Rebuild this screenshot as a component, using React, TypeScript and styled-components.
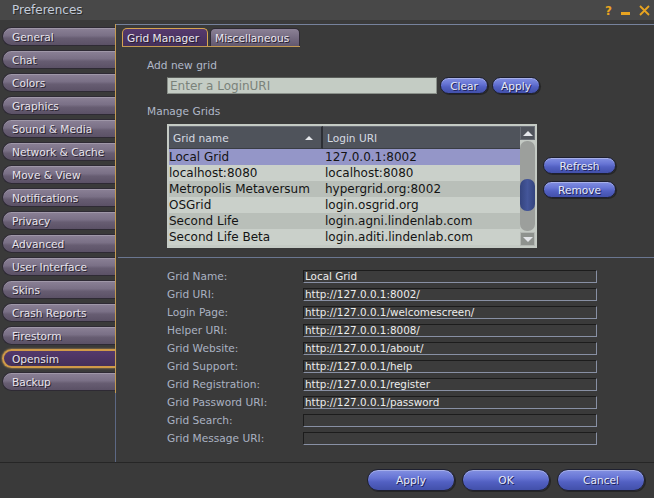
import React from "react";
import styled, { createGlobalStyle } from "styled-components";

const GlobalStyle = createGlobalStyle`
  html, body {
    margin: 0;
    padding: 0;
    background: #3a3a3a;
  }
  body {
    font-family: "DejaVu Sans", "Liberation Sans", sans-serif;
  }
  * {
    box-sizing: border-box;
  }
`;

const Window = styled.div`
  width: 654px;
  height: 498px;
  display: flex;
  flex-direction: column;
  background: #3a3a3a;
  overflow: hidden;
`;

const TitleBar = styled.div`
  height: 20px;
  flex: none;
  display: flex;
  align-items: center;
  padding: 0 4px 0 12px;
  background: #484848;
`;

const Title = styled.span`
  flex: 1;
  font-size: 12px;
  color: #c4ccda;
  text-shadow: 1px 1px 0 #2c2c2c;
`;

const TitleIcons = styled.div`
  display: flex;
  align-items: center;
  gap: 9px;
  color: #e8a420;
`;

const HelpGlyph = styled.span`
  font-size: 12px;
  font-weight: bold;
  line-height: 12px;
  margin-top: 1px;
`;

const Body = styled.div`
  flex: 1;
  display: flex;
  padding-top: 4px;
  min-height: 0;
`;

const Sidebar = styled.div`
  width: 116px;
  flex: none;
  display: flex;
  flex-direction: column;
`;

const TabList = styled.div`
  display: flex;
  flex-direction: column;
  gap: 4px;
  padding: 3px 0 2px 2px;
  border-right: 1px solid #c49a52;
`;

const SidebarFill = styled.div`
  flex: 1;
  border-right: 1px solid #5c6884;
`;

const SideTab = styled.div<{ $active?: boolean }>`
  height: 19px;
  display: flex;
  align-items: center;
  padding-left: ${(p) => (p.$active ? "8px" : "9px")};
  font-size: 10.6px;
  color: #e8e4ec;
  text-shadow: 1px 1px 0 #2a2430;
  border-radius: 10px 0 0 10px;
  white-space: nowrap;
  background: ${(p) =>
    p.$active
      ? "linear-gradient(#54396c, #44305a)"
      : "linear-gradient(#8b8196 0%, #7a7086 45%, #675d72 60%, #5b5166 100%)"};
  border: ${(p) => (p.$active ? "2px solid #d09a48" : "1px solid #2e2a34")};
  border-right: none;
  box-shadow: ${(p) =>
    p.$active ? "0 0 2px #e0b060" : "inset 0 1px 0 rgba(255,255,255,0.18)"};
`;

const Panel = styled.div`
  flex: 1;
  display: flex;
  flex-direction: column;
  border-top: 1px solid #76829c;
  min-width: 0;
`;

const TabStrip = styled.div`
  display: flex;
  gap: 2px;
  align-self: flex-start;
  width: 178px;
  margin: 3px 0 0 6px;
  border-bottom: 1px solid #c49a52;
`;

const Tab = styled.div<{ $active?: boolean }>`
  height: 18px;
  display: flex;
  align-items: center;
  padding: 0 4px;
  font-size: 10.6px;
  color: #ece8f0;
  text-shadow: 1px 1px 0 #241c2c;
  border-radius: 5px 5px 0 0;
  white-space: nowrap;
  width: ${(p) => (p.$active ? "86px" : "90px")};
  background: ${(p) =>
    p.$active
      ? "linear-gradient(#56396e, #44305a)"
      : "linear-gradient(#8b8196 0%, #766c82 50%, #62586e 100%)"};
  border: ${(p) => (p.$active ? "1px solid #d6a450" : "1px solid #2e2a34")};
  border-bottom: none;
`;

const GridBody = styled.div`
  padding-left: 31px;
  display: flex;
  flex-direction: column;
`;

const SectionLabel = styled.div<{ $top: number }>`
  margin-top: ${(p) => p.$top}px;
  height: 14px;
  line-height: 14px;
  font-size: 10.6px;
  color: #b0b8c8;
`;

const InputRow = styled.div`
  display: flex;
  align-items: center;
  margin: 5px 0 0 20px;
`;

const UriInput = styled.div`
  width: 270px;
  height: 17px;
  margin-right: 3px;
  padding-left: 2px;
  display: flex;
  align-items: center;
  background: #c4ccc4;
  border: 1px solid #8a908a;
  border-top-color: #5a5e5a;
  font-size: 12px;
  color: #7a827a;
`;

const PillButton = styled.button<{ $w: number; $h: number }>`
  width: ${(p) => p.$w}px;
  height: ${(p) => p.$h}px;
  flex: none;
  padding: 0;
  border-radius: ${(p) => p.$h / 2}px;
  border: 1px solid #1e2030;
  background: linear-gradient(#8390e2 0%, #6674d4 40%, #5260c2 60%, #4250aa 100%);
  box-shadow: inset 0 1px 0 rgba(255, 255, 255, 0.3), 1px 1px 0 #262626;
  color: #e6eaf8;
  font-family: "DejaVu Sans", sans-serif;
  font-size: 10.6px;
  text-shadow: 1px 1px 0 #1e2256;
`;

const ButtonPair = styled.div`
  display: flex;
  gap: 4px;
`;

const ListRow = styled.div`
  display: flex;
  margin: 6px 0 0 20px;
  gap: 6px;
`;

const Table = styled.div`
  width: 370px;
  height: 124px;
  padding: 2px;
  display: flex;
  background: #c4cac4;
`;

const TableMain = styled.div`
  flex: 1;
  display: flex;
  flex-direction: column;
`;

const HeaderRow = styled.div`
  height: 23px;
  display: flex;
  background: #4f535b;
`;

const HeaderCell = styled.div<{ $w?: number }>`
  ${(p) => (p.$w ? `width: ${p.$w}px;` : "flex: 1;")}
  display: flex;
  align-items: center;
  padding-left: 4px;
  font-size: 10.6px;
  color: #d6dae2;
  border-right: ${(p) => (p.$w ? "2px solid #2c2e34" : "none")};
  border-bottom: 1px solid #3a3d44;
  border-top: 1px solid #6a6e76;
`;

const SortArrow = styled.span`
  margin-left: auto;
  margin-right: 8px;
  width: 0;
  height: 0;
  border-left: 4px solid transparent;
  border-right: 4px solid transparent;
  border-bottom: 4px solid #e4e6ea;
`;

const GridRow = styled.div<{ $tone: "sel" | "light" | "dark" }>`
  height: 16px;
  display: flex;
  align-items: center;
  font-size: 12px;
  color: #141414;
  white-space: nowrap;
  background: ${(p) =>
    p.$tone === "sel" ? "#9496c8" : p.$tone === "light" ? "#cad0ca" : "#b9bfb9"};
`;

const Cell = styled.div<{ $w?: number }>`
  ${(p) => (p.$w ? `width: ${p.$w}px;` : "flex: 1;")}
  padding-left: ${(p) => (p.$w ? "0" : "2px")};
  overflow: hidden;
`;

const ScrollBar = styled.div`
  width: 15px;
  display: flex;
  flex-direction: column;
  gap: 1px;
`;

const ScrollArrow = styled.div<{ $down?: boolean }>`
  height: 14px;
  display: flex;
  align-items: center;
  justify-content: center;
  background: ${(p) => (p.$down ? "#8e928e" : "#50545c")};
  border: 1px solid ${(p) => (p.$down ? "#b4b8b4" : "#6a6e76")};
`;

const ArrowTri = styled.span<{ $down?: boolean }>`
  width: 0;
  height: 0;
  border-left: 5px solid transparent;
  border-right: 5px solid transparent;
  ${(p) =>
    p.$down ? "border-top: 5px solid #e4e6ea;" : "border-bottom: 5px solid #e4e6ea;"}
`;

const ScrollTrack = styled.div`
  flex: 1;
  display: flex;
  flex-direction: column;
  padding-top: 38px;
  background: #9c9f9c;
  border-radius: 7px;
`;

const ScrollThumb = styled.div`
  height: 32px;
  border-radius: 7px;
  background: linear-gradient(90deg, #34447e, #44569a 50%, #34447e);
`;

const SideButtons = styled.div`
  display: flex;
  flex-direction: column;
  gap: 7px;
  padding-top: 33px;
`;

const Separator = styled.div`
  height: 1px;
  margin: 9px 0 0 2px;
  background: #6a7690;
`;

const Form = styled.div`
  display: grid;
  grid-template-columns: 136px 294px;
  grid-auto-rows: 13px;
  row-gap: 5px;
  margin-top: 12px;
  padding-left: 51px;
`;

const FieldLabel = styled.div`
  font-size: 10.6px;
  line-height: 12px;
  color: #aab2c2;
  white-space: nowrap;
`;

const FieldBox = styled.div`
  height: 13px;
  padding-left: 1px;
  font-size: 10.4px;
  line-height: 11px;
  color: #ececec;
  white-space: nowrap;
  overflow: hidden;
  background: #3c3c3c;
  border: 1px solid #8890a4;
  border-top-color: #1c1c1c;
  border-left-color: #1c1c1c;
`;

const Footer = styled.div`
  height: 36px;
  flex: none;
  display: flex;
  justify-content: flex-end;
  gap: 7px;
  padding: 6px 9px 0 0;
  border-top: 1px solid #262626;
`;

const sections = [
  "General",
  "Chat",
  "Colors",
  "Graphics",
  "Sound & Media",
  "Network & Cache",
  "Move & View",
  "Notifications",
  "Privacy",
  "Advanced",
  "User Interface",
  "Skins",
  "Crash Reports",
  "Firestorm",
  "Opensim",
  "Backup",
];

const grids = [
  ["Local Grid", "127.0.0.1:8002"],
  ["localhost:8080", "localhost:8080"],
  ["Metropolis Metaversum", "hypergrid.org:8002"],
  ["OSGrid", "login.osgrid.org"],
  ["Second Life", "login.agni.lindenlab.com"],
  ["Second Life Beta", "login.aditi.lindenlab.com"],
];

const fields = [
  ["Grid Name:", "Local Grid"],
  ["Grid URI:", "http://127.0.0.1:8002/"],
  ["Login Page:", "http://127.0.0.1/welcomescreen/"],
  ["Helper URI:", "http://127.0.0.1:8008/"],
  ["Grid Website:", "http://127.0.0.1/about/"],
  ["Grid Support:", "http://127.0.0.1/help"],
  ["Grid Registration:", "http://127.0.0.1/register"],
  ["Grid Password URI:", "http://127.0.0.1/password"],
  ["Grid Search:", ""],
  ["Grid Message URI:", ""],
];

export default function App() {
  return (
    <>
      <GlobalStyle />
      <Window>
        <TitleBar>
          <Title>Preferences</Title>
          <TitleIcons>
            <HelpGlyph>?</HelpGlyph>
            <svg width="9" height="12" viewBox="0 0 9 12">
              <rect x="0" y="8" width="9" height="3" fill="#e8a420" />
            </svg>
            <svg width="11" height="11" viewBox="0 0 11 11">
              <path d="M1 1 L10 10 M10 1 L1 10" stroke="#e8a420" strokeWidth="1.8" />
            </svg>
          </TitleIcons>
        </TitleBar>

        <Body>
          <Sidebar>
            <TabList>
              {sections.map((s) => (
                <SideTab key={s} $active={s === "Opensim"}>
                  {s}
                </SideTab>
              ))}
            </TabList>
            <SidebarFill />
          </Sidebar>

          <Panel>
            <TabStrip>
              <Tab $active>Grid Manager</Tab>
              <Tab>Miscellaneous</Tab>
            </TabStrip>

            <GridBody>
              <SectionLabel $top={11}>Add new grid</SectionLabel>
              <InputRow>
                <UriInput>Enter a LoginURI</UriInput>
                <ButtonPair>
                  <PillButton $w={48} $h={17}>Clear</PillButton>
                  <PillButton $w={48} $h={17}>Apply</PillButton>
                </ButtonPair>
              </InputRow>

              <SectionLabel $top={10}>Manage Grids</SectionLabel>
              <ListRow>
                <Table>
                  <TableMain>
                    <HeaderRow>
                      <HeaderCell $w={154}>
                        Grid name
                        <SortArrow />
                      </HeaderCell>
                      <HeaderCell>Login URI</HeaderCell>
                    </HeaderRow>
                    {grids.map(([name, uri], i) => (
                      <GridRow
                        key={name}
                        $tone={i === 0 ? "sel" : i % 2 ? "light" : "dark"}
                      >
                        <Cell $w={154}>{name}</Cell>
                        <Cell>{uri}</Cell>
                      </GridRow>
                    ))}
                  </TableMain>
                  <ScrollBar>
                    <ScrollArrow>
                      <ArrowTri />
                    </ScrollArrow>
                    <ScrollTrack>
                      <ScrollThumb />
                    </ScrollTrack>
                    <ScrollArrow $down>
                      <ArrowTri $down />
                    </ScrollArrow>
                  </ScrollBar>
                </Table>
                <SideButtons>
                  <PillButton $w={73} $h={17}>Refresh</PillButton>
                  <PillButton $w={73} $h={17}>Remove</PillButton>
                </SideButtons>
              </ListRow>
            </GridBody>

            <Separator />

            <Form>
              {fields.map(([label, value]) => (
                <React.Fragment key={label}>
                  <FieldLabel>{label}</FieldLabel>
                  <FieldBox>{value}</FieldBox>
                </React.Fragment>
              ))}
            </Form>
          </Panel>
        </Body>

        <Footer>
          <PillButton $w={88} $h={22}>Apply</PillButton>
          <PillButton $w={88} $h={22}>OK</PillButton>
          <PillButton $w={88} $h={22}>Cancel</PillButton>
        </Footer>
      </Window>
    </>
  );
}
